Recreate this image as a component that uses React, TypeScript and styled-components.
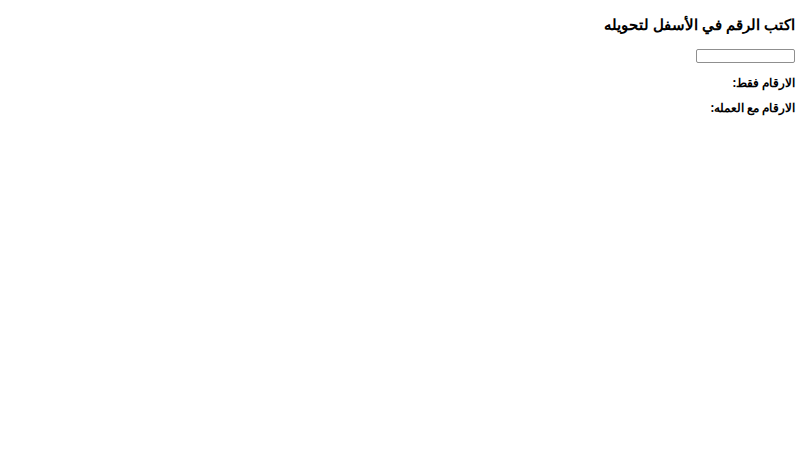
import React from "react";
import styled, { createGlobalStyle } from "styled-components";

const GlobalStyle = createGlobalStyle`
  html, body {
    margin: 0;
    padding: 0;
    background: #ffffff;
  }
  body {
    font-family: "Noto Sans", sans-serif;
    color: #000000;
  }
`;

const Page = styled.main`
  direction: rtl;
  display: flex;
  flex-direction: column;
  align-items: flex-start;
  padding: 12px 5px 0 5px;
`;

const Title = styled.h3`
  margin: 0 0 13px 0;
  font-size: 15px;
  font-weight: bold;
  line-height: 24px;
`;

const NumberInput = styled.input`
  box-sizing: border-box;
  width: 99px;
  height: 14px;
  margin: 0 0 12px 0;
  padding: 0 3px;
  border: 1px solid #8f8f8f;
  border-radius: 2px;
  font-size: 10px;
  font-family: inherit;
  background: #ffffff;
`;

const ResultLine = styled.div`
  font-size: 11.6px;
  font-weight: bold;
  line-height: 16px;
  margin-bottom: 9px;
`;

export default function App() {
  return (
    <>
      <GlobalStyle />
      <Page>
        <Title>اكتب الرقم في الأسفل لتحويله</Title>
        <NumberInput type="text" aria-label="الرقم" />
        <ResultLine>الارقام فقط:</ResultLine>
        <ResultLine>الارقام مع العمله:</ResultLine>
      </Page>
    </>
  );
}
